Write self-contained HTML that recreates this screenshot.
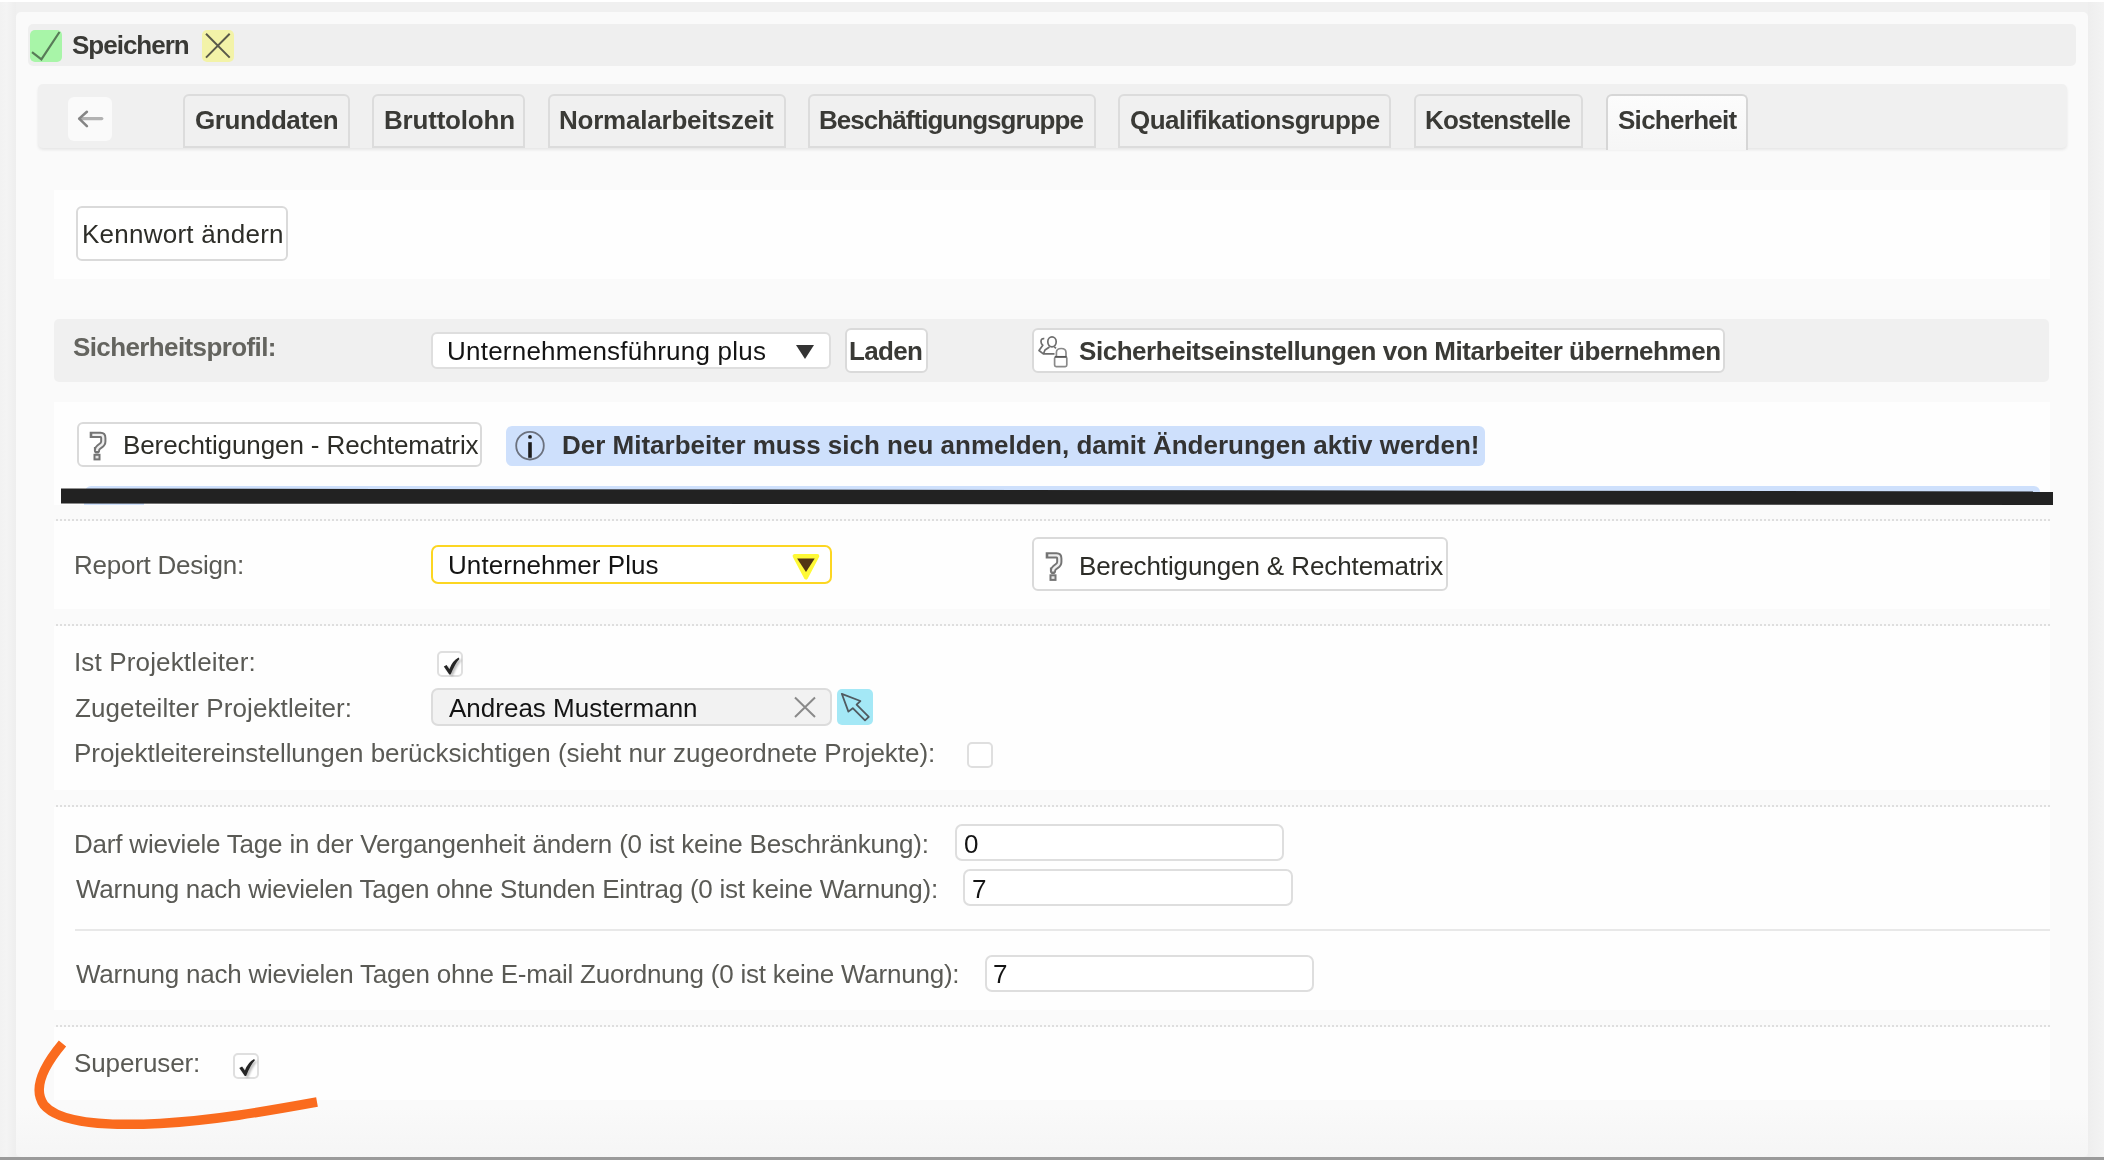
<!DOCTYPE html>
<html><head><meta charset="utf-8">
<style>
html,body{margin:0;padding:0;}
body{width:2104px;height:1160px;position:relative;overflow:hidden;background:#f0f0f0;font-family:"Liberation Sans",sans-serif;}
.a{position:absolute;box-sizing:border-box;}
.t{position:absolute;font-size:26px;line-height:26px;white-space:pre;color:#5a5a55;will-change:transform;}
.b{font-weight:bold;}
.dk{color:#2d2d28;}
.sb{color:#3a3a36;}
.bk{color:#141414;}
.dot{position:absolute;height:2px;background-image:linear-gradient(to right,#dedede 50%,transparent 50%);background-size:4px 2px;}
.tab{position:absolute;top:94px;height:54px;box-sizing:border-box;border:2px solid #dcdcdc;border-radius:6px 6px 0 0;background:#f0f0f0;}
.btn{position:absolute;box-sizing:border-box;border:2px solid #dadada;border-radius:6px;background:#fff;}
.inp{position:absolute;box-sizing:border-box;border:2px solid #dedede;border-radius:7px;background:#fff;}
.cb{position:absolute;box-sizing:border-box;border:2px solid #dfdfdf;border-radius:5px;background:#fff;width:26px;height:26px;}
</style></head><body>
<div class="a" style="left:0;top:0;width:2104px;height:2px;background:#fff"></div>
<!-- container -->
<div class="a" style="left:0;top:2px;width:16px;height:1155px;background:linear-gradient(to right,#f2f2f2,#f4f4f4 40%,#eeeeee)"></div>
<div class="a" style="left:2088px;top:2px;width:16px;height:1155px;background:linear-gradient(to right,#eeeeee,#f1f1f1 60%,#f3f3f3)"></div>
<div class="a" style="left:16px;top:12px;width:2072px;height:1145px;background:linear-gradient(to bottom,#fafafa 0,#fafafa 1095px,#f5f5f5 1145px);border-radius:5px;"></div>
<div class="a" style="left:0;top:1157px;width:2104px;height:3px;background:#9a9a9a"></div>
<!-- toolbar -->
<div class="a" style="left:28px;top:24px;width:2048px;height:42px;background:#efefef;border-radius:5px;"></div>
<div class="a" style="left:30px;top:30px;width:32px;height:32px;background:#a8f5a8;border-radius:5px;"></div>
<div class="a" style="left:202px;top:30px;width:32px;height:32px;background:#f3f3a8;border-radius:5px;"></div>
<span class="t b sb" id="speichern" style="left:72px;top:32px;letter-spacing:-1.0px;">Speichern</span>

<!-- tab bar -->
<div class="a" style="left:38px;top:84px;width:2028.5px;height:64px;background:#f0f0f0;border-radius:5px;box-shadow:0 2px 3px rgba(0,0,0,0.08);"></div>
<div class="a" style="left:68px;top:97px;width:44px;height:44px;background:#fafafa;border-radius:6px;"></div>
<div class="tab" style="left:183px;width:167px;"></div>
<div class="tab" style="left:372px;width:153px;"></div>
<div class="tab" style="left:548px;width:238px;"></div>
<div class="tab" style="left:808px;width:288px;"></div>
<div class="tab" style="left:1118px;width:273px;"></div>
<div class="tab" style="left:1414px;width:169px;"></div>
<div class="tab" style="left:1606px;width:142px;height:56px;border-color:#d6d6d6;border-bottom:none;background:linear-gradient(to bottom,#fcfcfc,#f6f6f6);"></div>
<span class="t b sb" style="left:195px;top:107px;letter-spacing:-0.42px;">Grunddaten</span>
<span class="t b sb" style="left:384px;top:107px;letter-spacing:-0.2px;">Bruttolohn</span>
<span class="t b sb" style="left:559.1px;top:107px;letter-spacing:-0.22px;">Normalarbeitszeit</span>
<span class="t b sb" style="left:819.4px;top:107px;letter-spacing:-0.96px;">Beschäftigungsgruppe</span>
<span class="t b sb" style="left:1130px;top:107px;letter-spacing:-0.52px;">Qualifikationsgruppe</span>
<span class="t b sb" style="left:1425.4px;top:107px;letter-spacing:-0.78px;">Kostenstelle</span>
<span class="t b sb" style="left:1617.7px;top:107px;letter-spacing:-0.72px;">Sicherheit</span>

<!-- panel 1 -->
<div class="a" style="left:54px;top:190px;width:1996px;height:89px;background:#fefefe;"></div>
<div class="btn" style="left:76px;top:206px;width:212px;height:55px;"></div>
<span class="t dk" style="left:81.5px;top:221px;letter-spacing:0.25px;">Kennwort ändern</span>

<!-- gray section -->
<div class="a" style="left:54px;top:319px;width:1995px;height:63px;background:#f0f0f0;border-radius:5px;"></div>
<span class="t b" style="color:#64645f;left:73px;top:334px;letter-spacing:-0.61px;">Sicherheitsprofil:</span>
<div class="btn" style="left:431px;top:332px;width:400px;height:37px;border-color:#dedede;"></div>
<span class="t bk" style="left:447.2px;top:338px;letter-spacing:0.23px;">Unternehmensführung plus</span>
<div class="a" style="left:796px;top:345px;width:0;height:0;border-left:9px solid transparent;border-right:9px solid transparent;border-top:14px solid #333;"></div>
<div class="btn" style="left:845px;top:328px;width:83px;height:45px;"></div>
<span class="t b sb" style="left:849.3px;top:338px;letter-spacing:-0.65px;">Laden</span>
<div class="btn" style="left:1032px;top:328px;width:693px;height:45px;"></div>
<span class="t b sb" style="left:1079px;top:338px;letter-spacing:-0.45px;">Sicherheitseinstellungen von Mitarbeiter übernehmen</span>

<!-- panel 2 -->
<div class="a" style="left:54px;top:402px;width:1996px;height:103px;background:#fefefe;"></div>
<div class="btn" style="left:77px;top:422px;width:405px;height:45px;"></div>
<span class="t dk" style="left:123.3px;top:432px;letter-spacing:-0.1px;">Berechtigungen - Rechtematrix</span>
<div class="a" style="left:506px;top:426px;width:979px;height:40px;background:#cee0fc;border-radius:6px;"></div>
<span class="t b" style="left:561.5px;top:432px;color:#333;">Der Mitarbeiter muss sich neu anmelden, damit Änderungen aktiv werden!</span>
<div class="a" style="left:85px;top:486px;width:1955px;height:8px;background:#cee0fc;border-radius:6px 6px 0 0;"></div>
<div class="a" style="left:84px;top:503px;width:60px;height:2px;background:#cee0fc;"></div>
<svg class="a" style="left:0;top:0;" width="2104" height="1160"><polygon points="61,488.5 2053,491.5 2053,505 61,503.5" fill="#222"/></svg>

<div class="dot" style="left:56px;top:519px;width:1994px;"></div>
<!-- panel 3 -->
<div class="a" style="left:54px;top:521px;width:1996px;height:88px;background:#fefefe;"></div>
<span class="t" style="left:74.2px;top:552px;letter-spacing:-0.25px;">Report Design:</span>
<div class="inp" style="left:431px;top:545px;width:401px;height:39px;border-color:#fcd622;"></div>
<span class="t bk" style="left:448.3px;top:552px;letter-spacing:0.07px;">Unternehmer Plus</span>
<div class="btn" style="left:1032px;top:537px;width:416px;height:54px;"></div>
<span class="t dk" style="left:1079.3px;top:553px;letter-spacing:-0.1px;">Berechtigungen &amp; Rechtematrix</span>

<div class="dot" style="left:56px;top:624px;width:1994px;"></div>
<!-- panel 4 -->
<div class="a" style="left:54px;top:626px;width:1996px;height:164px;background:#fefefe;"></div>
<span class="t" style="left:74px;top:649px;letter-spacing:0.15px;">Ist Projektleiter:</span>
<div class="cb" style="left:437px;top:651px;"></div>
<span class="t" style="left:75px;top:695px;letter-spacing:0.1px;">Zugeteilter Projektleiter:</span>
<div class="inp" style="left:431px;top:688px;width:401px;height:38px;background:#f2f2f2;border-color:#dcdcdc;"></div>
<span class="t bk" style="left:449.4px;top:695px;">Andreas Mustermann</span>
<div class="a" style="left:837px;top:689px;width:36px;height:36px;background:#a4e8f6;border-radius:5px;"></div>
<span class="t" style="left:74px;top:740px;letter-spacing:-0.04px;">Projektleitereinstellungen berücksichtigen (sieht nur zugeordnete Projekte):</span>
<div class="cb" style="left:967px;top:742px;"></div>

<div class="dot" style="left:56px;top:805px;width:1994px;"></div>
<!-- panel 5 -->
<div class="a" style="left:54px;top:807px;width:1996px;height:203px;background:#fefefe;"></div>
<span class="t" style="left:74px;top:831px;letter-spacing:-0.2px;">Darf wieviele Tage in der Vergangenheit ändern (0 ist keine Beschränkung):</span>
<div class="inp" style="left:955px;top:824px;width:329px;height:37px;"></div>
<span class="t bk" style="left:964px;top:831px;">0</span>
<span class="t" style="left:76px;top:876px;letter-spacing:-0.24px;">Warnung nach wievielen Tagen ohne Stunden Eintrag (0 ist keine Warnung):</span>
<div class="inp" style="left:963px;top:869px;width:330px;height:37px;"></div>
<span class="t bk" style="left:972px;top:876px;">7</span>
<div class="a" style="left:75px;top:929px;width:1975px;height:2px;background:#e8e8e8;"></div>
<span class="t" style="left:76px;top:961px;letter-spacing:-0.22px;">Warnung nach wievielen Tagen ohne E-mail Zuordnung (0 ist keine Warnung):</span>
<div class="inp" style="left:985px;top:955px;width:329px;height:37px;"></div>
<span class="t bk" style="left:993px;top:961px;">7</span>

<div class="dot" style="left:56px;top:1025px;width:1994px;"></div>
<!-- panel 6 -->
<div class="a" style="left:54px;top:1027px;width:1996px;height:73px;background:#fefefe;"></div>
<span class="t" style="left:74px;top:1050px;letter-spacing:-0.1px;">Superuser:</span>
<div class="cb" style="left:233px;top:1053px;"></div>


<svg class="a" style="left:0;top:0;" width="2104" height="1160">
 <!-- green check -->
 <polyline points="32,52.2 41.4,59.3 59.5,32" stroke="#4f6e4f" stroke-width="2.2" fill="none" stroke-opacity="0.9"/>
 <!-- yellow X -->
 <path d="M206,33.7 L229.7,57.6 M229.7,33.7 L206,57.6" stroke="#5a5a4a" stroke-width="2" fill="none"/>
 <!-- back arrow -->
 <line x1="80" y1="118.6" x2="101.7" y2="118.6" stroke="#b2b2b2" stroke-width="3.4" stroke-linecap="round"/>
 <polyline points="86.9,111.8 79.2,118.6 86.9,126.1" stroke="#858585" stroke-width="2.6" fill="none" stroke-linecap="round" stroke-linejoin="round"/>
 <!-- question icons -->
 <g id="q1">
  <path d="M92.8,434.8 H100.5 Q103.3,434.8 103.3,438 V441.5 Q103.3,444 100.5,445.8 L98.6,447.2 Q97,448.4 97,450.5 V450" stroke="#747474" stroke-width="6.2" fill="none" stroke-linejoin="round" stroke-linecap="square"/>
  <path d="M92.3,434.8 H100.5 Q103.3,434.8 103.3,438 V441.5 Q103.3,444 100.5,445.8 L98.6,447.2 Q97,448.4 97,450.5 V451" stroke="#eeeeee" stroke-width="2.3" fill="none" stroke-linejoin="round"/>
  <rect x="94.5" y="454.8" width="5" height="4.6" fill="#e4e4e4" stroke="#747474" stroke-width="2"/>
 </g>
 <use href="#q1" transform="translate(956,120.5)"/>
 <!-- users lock icon -->
 <g stroke="#6e6e6e" stroke-width="1.7" fill="none" stroke-linejoin="round">
  <path d="M1044.3,338.6 Q1041,338.2 1041,341.5 Q1041,344 1042.8,345.2 L1039,350.5 L1043.3,353.8 H1054.5"/>
  <ellipse cx="1052" cy="341.8" rx="4.2" ry="5"/>
  <path d="M1049.5,347 L1045,350 L1043.5,353.8"/>
  <path d="M1054.3,346.8 L1056,348.3"/>
  <path d="M1056.4,357 V352.5 Q1056.4,348.5 1061.2,348.5 Q1066,348.5 1066,352.5 V357" stroke="#8a8a8a"/>
  <rect x="1054.6" y="356.8" width="12.2" height="9.8" rx="1.5" stroke="#8a8a8a"/>
  <line x1="1055" y1="356.8" x2="1066.5" y2="356.8" stroke="#555"/>
 </g>
 <!-- info icon -->
 <circle cx="530" cy="445.7" r="13.8" stroke="#6b717e" stroke-width="1.8" fill="none"/>
 <circle cx="530" cy="436.9" r="1.9" fill="#222"/>
 <rect x="528.2" y="442.2" width="3.6" height="15.6" fill="#1c1c1c"/>
 <!-- yellow select arrow -->
 <polygon points="794.6,556 817.3,556 806,577.6" fill="#fef936" stroke="#fef936" stroke-width="4" stroke-linejoin="round"/>
 <polygon points="797.1,558.5 814.7,558.5 806,571.9" fill="#523514"/>
 <!-- andreas X -->
 <path d="M795,697.5 L815,717 M815,697.5 L795,717" stroke="#8a8a8a" stroke-width="2" fill="none"/>
 <!-- cursor -->
 <path d="M841.8,693.8 L860.4,701 L856.6,704.6 L868.8,716.8 L865,720.4 L852.8,708.2 L848.4,711.6 Z" stroke="#505a60" stroke-width="1.8" fill="none" stroke-linejoin="round"/>
 <!-- checks -->
 <filter id="blr" x="-50%" y="-50%" width="200%" height="200%"><feGaussianBlur stdDeviation="1.2"/></filter>
 <g id="ck">
  <path d="M443.8,666.6 L446.6,665 L449.4,669.2 Q452.3,660.8 458.6,657.6 L459.4,658.9 Q455,663.5 450.6,674.6 L449.3,674.6 Z" fill="#000" opacity="0.28" transform="translate(2,1.5)" filter="url(#blr)"/>
  <path d="M443.8,666.6 L446.6,665 L449.4,669.2 Q452.3,660.8 458.6,657.6 L459.4,658.9 Q455,663.5 450.6,674.6 L449.3,674.6 Z" fill="#262626"/>
 </g>
 <use href="#ck" transform="translate(-204.5,401.4)"/>
 <!-- orange stroke -->
 <path d="M62.5,1043.5 C42,1068 33,1090 44,1105 C60,1124 110,1126 160,1123.5 C215,1120 262,1112 317,1102" stroke="#fa6b1e" stroke-width="9.5" fill="none"/>
</svg>
</body></html>
